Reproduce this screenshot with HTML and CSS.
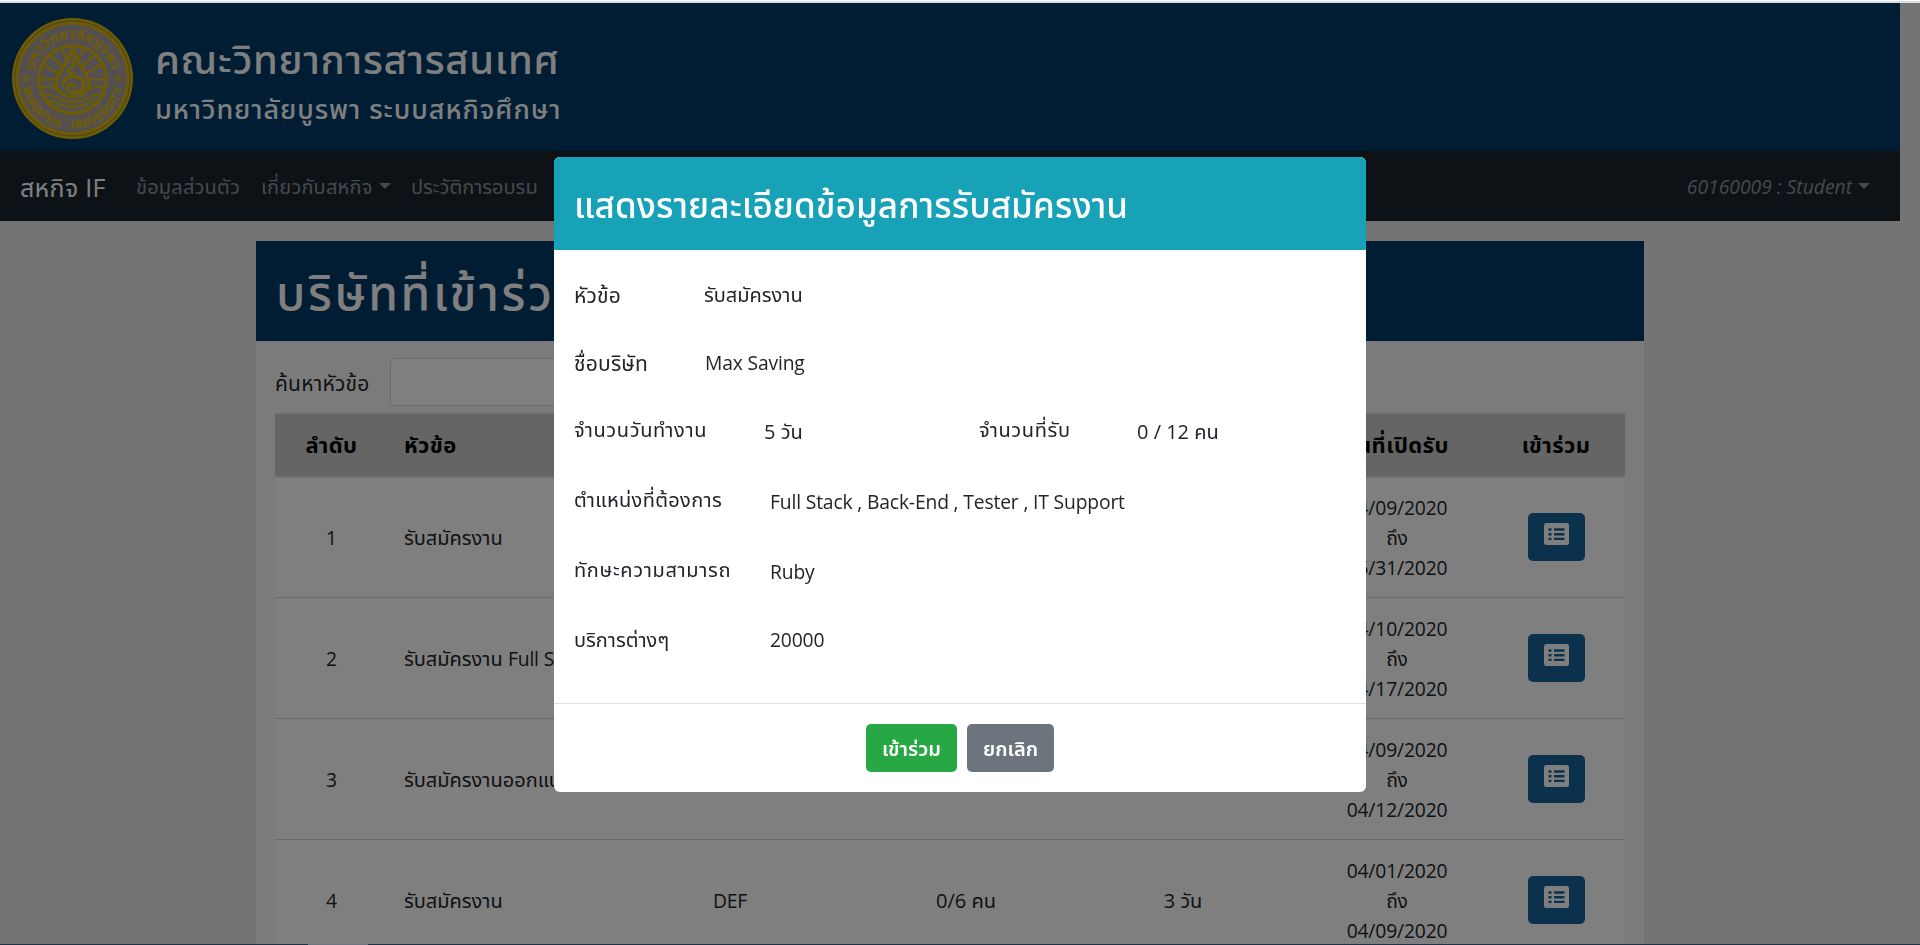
FILE: index.html
```html
<!DOCTYPE html>
<html lang="th">
<head>
<meta charset="utf-8">
<title>สหกิจ IF</title>
<link rel="stylesheet" href="styles.css">
</head>
<body>
<div class="page">
  <header class="banner">
    <svg class="logo" viewBox="0 0 120 120">
      <defs>
        <path id="arcTop" d="M20.500 60a39.500 39.500 0 0 1 79 0"/>
        <path id="arcBottom" d="M10 60a50 50 0 0 0 100 0"/>
      </defs>
      <circle cx="60" cy="60" r="60" fill="#ddba00"/>
      <circle cx="60" cy="60" r="57" fill="none" stroke="#a08a50" stroke-width="1.200"/>
      <circle cx="60" cy="60" r="53.500" fill="#a9a0a4"/>
      <text class="seal-th"><textPath href="#arcTop" startOffset="50%" text-anchor="middle">มหาวิทยาลัยบูรพา</textPath></text>
      <text class="seal-en"><textPath href="#arcBottom" startOffset="50%" text-anchor="middle">BURAPHA &#160; UNIVERSITY</textPath></text>
      <g fill="none" stroke="#ddba00">
        <circle cx="14.500" cy="60" r="2.300" stroke-width="1.600"/>
        <circle cx="105" cy="60" r="2.300" stroke-width="1.600"/>
        <circle cx="60" cy="61" r="33.500" stroke-width="3"/>
        <path stroke-width="2.200" d="M57 47L50 31M63 47l7-16M51 49L38 37M69 49l13-12M46 55L31 46M74 55l15-9M43 61H29M77 61h14"/>
        <path stroke-width="2" d="M28 69q12-4 16 2q16 13 32 0q5-6 16-2M29 76q10-1 15 3q16 9 32 0q5-4 15-3M32 82q8 0 13 3q15 6 30 0q5-3 13-3"/>
        <path fill="#a9a0a4" stroke-width="3" d="M60 28C58 45 43 54 44 66a16 12 0 0 0 32 0C77 54 62 45 60 28Z"/>
        <path stroke-width="3" stroke-linecap="round" d="M60 42q4 6-2 8q-5 4 2 5M51 66q0-7 9-8q11 0 11 8q-1 8-10 8q-7-1-6-6q4-4 8 0"/>
      </g>
    </svg>
    <div class="banner-text">
      <h1 class="faculty">คณะวิทยาการสารสนเทศ</h1>
      <p class="univ">มหาวิทยาลัยบูรพา ระบบสหกิจศึกษา</p>
    </div>
  </header>
  <nav class="nav">
    <span class="brand">สหกิจ IF</span>
    <span class="link link-info">ข้อมูลส่วนตัว</span>
    <span class="link link-about">เกี่ยวกับสหกิจ<i class="caret"></i></span>
    <span class="link link-history">ประวัติการอบรม</span>
    <span class="link user">60160009 : Student<i class="caret"></i></span>
  </nav>
  <main class="card">
    <div class="card-head"><h2 class="card-title">บริษัทที่เข้าร่วม</h2></div>
    <div class="card-body">
      <div class="search"><label class="search-label">ค้นหาหัวข้อ</label><input class="search-input" type="text"></div>
      <table class="jobs">
        <colgroup><col class="c1"><col class="c2"><col class="c3"><col class="c4"><col class="c5"><col class="c6"><col class="c7"></colgroup>
        <thead><tr><th>ลำดับ</th><th class="left">หัวข้อ</th><th></th><th></th><th></th><th>วันที่เปิดรับ</th><th>เข้าร่วม</th></tr></thead>
        <tbody>
          <tr><td class="latin">1</td><td class="left">รับสมัครงาน</td><td></td><td></td><td></td><td class="latin">04/09/2020<br>ถึง<br>05/31/2020</td><td><button class="list-btn"><svg class="list-icon" viewBox="0 0 25 22"><rect width="25" height="22" rx="2.500" fill="#fff"/><path class="list-lines" d="M4.500 6.500h3M10 6.500h10.500M4.500 11.200h3M10 11.200h10.500M4.500 15.900h3M10 15.900h10.500"/></svg></button></td></tr>
          <tr><td class="latin">2</td><td class="left">รับสมัครงาน <span class="latin">Full S</span></td><td></td><td></td><td></td><td class="latin">04/10/2020<br>ถึง<br>04/17/2020</td><td><button class="list-btn"><svg class="list-icon" viewBox="0 0 25 22"><rect width="25" height="22" rx="2.500" fill="#fff"/><path class="list-lines" d="M4.500 6.500h3M10 6.500h10.500M4.500 11.200h3M10 11.200h10.500M4.500 15.900h3M10 15.900h10.500"/></svg></button></td></tr>
          <tr><td class="latin">3</td><td class="left">รับสมัครงานออกแบ</td><td></td><td></td><td></td><td class="latin">04/09/2020<br>ถึง<br>04/12/2020</td><td><button class="list-btn"><svg class="list-icon" viewBox="0 0 25 22"><rect width="25" height="22" rx="2.500" fill="#fff"/><path class="list-lines" d="M4.500 6.500h3M10 6.500h10.500M4.500 11.200h3M10 11.200h10.500M4.500 15.900h3M10 15.900h10.500"/></svg></button></td></tr>
          <tr><td class="latin">4</td><td class="left">รับสมัครงาน</td><td class="latin">DEF</td><td>0/6 คน</td><td>3 วัน</td><td class="latin">04/01/2020<br>ถึง<br>04/09/2020</td><td><button class="list-btn"><svg class="list-icon" viewBox="0 0 25 22"><rect width="25" height="22" rx="2.500" fill="#fff"/><path class="list-lines" d="M4.500 6.500h3M10 6.500h10.500M4.500 11.200h3M10 11.200h10.500M4.500 15.900h3M10 15.900h10.500"/></svg></button></td></tr>
        </tbody>
      </table>
    </div>
  </main>
</div>
<div class="backdrop">
  <section class="modal">
    <div class="modal-head"><h3 class="modal-title">แสดงรายละเอียดข้อมูลการรับสมัครงาน</h3></div>
    <div class="modal-body">
      <div class="row short"><span class="wide">หัวข้อ</span><span>รับสมัครงาน</span></div>
      <div class="row short"><span class="wide">ชื่อบริษัท</span><span class="latin name">Max Saving</span></div>
      <div class="row quad"><span class="spaced">จำนวนวันทำงาน</span><span class="low">5 วัน</span><span class="spaced">จำนวนที่รับ</span><span class="low">0 / 12 คน</span></div>
      <div class="row long"><span class="slight">ตำแหน่งที่ต้องการ</span><span class="latin low">Full Stack , Back-End , Tester , IT Support</span></div>
      <div class="row long"><span class="spaced">ทักษะความสามารถ</span><span class="latin low">Ruby</span></div>
      <div class="row long"><span>บริการต่างๆ</span><span class="latin">20000</span></div>
    </div>
    <div class="modal-foot"><button class="btn join">เข้าร่วม</button><button class="btn cancel">ยกเลิก</button></div>
  </section>
</div>
<div class="edge-top"></div>
<div class="edge-bottom"></div>
</body>
</html>
```
FILE: styles.css
```css
* { box-sizing: border-box; }
body { margin: 0; height: 945px; overflow: hidden; background: #e8e8e8; color: #212529; font: 20px/30px "Open Sans", "Noto Sans", "Noto Sans Thai", sans-serif; }
h1, h2, h3, p { margin: 0; font-weight: 500; }
.latin { font-size: 19.300px; letter-spacing: -.16px; }
.name { padding-left: 1px; }
.wide { font-size: 21px; letter-spacing: .2px; }
.spaced { letter-spacing: .65px; }
.slight { letter-spacing: .35px; }
.page { width: 1900px; height: 945px; padding-top: 3px; overflow: hidden; }
.banner { height: 148px; background: #003b68; display: flex; padding: 15px 12px; gap: 22px; color: #fff; }
.logo { width: 121px; height: 121px; }
.seal-th { font-size: 14px; font-weight: 700; fill: #ddba00; letter-spacing: .3px; }
.seal-en { font: 700 12px "Roboto", sans-serif; fill: #ddba00; letter-spacing: .3px; }
.banner-text { padding-top: 13px; white-space: nowrap; }
.faculty { font-size: 40px; line-height: 56px; letter-spacing: .7px; }
.univ { font-size: 27px; line-height: 44px; font-weight: 500; letter-spacing: .95px; }
.nav { height: 70px; background: #1b252f; display: flex; align-items: center; padding: 2px 30px 0 20px; white-space: nowrap; color: #8d9297; }
.brand { font-size: 25px; color: #fff; width: 116px; letter-spacing: .3px; }
.link-info { width: 125px; letter-spacing: .2px; }
.link-about { width: 150px; letter-spacing: .2px; }
.user { margin-left: auto; font-style: italic; font-size: 19.300px; }
.caret { display: inline-block; margin-left: 6px; vertical-align: 5px; border: 6px solid transparent; border-top-color: currentColor; border-bottom: 0; }
.card { margin: 20px 0 0 256px; width: 1388px; background: #f7f7f7; }
.card-head { height: 100px; background: #003b68; color: #fff; padding: 21px 20px; }
.card-title { font-size: 48px; line-height: 60px; white-space: nowrap; letter-spacing: 2.600px; }
.card-body { padding: 17px 19px; }
.search { display: flex; align-items: center; height: 48px; margin-bottom: 7px; }
.search-label { width: 115px; white-space: nowrap; font-size: 21px; padding-top: 1px; letter-spacing: .2px; }
.search-input { width: 400px; height: 48px; border: 1px solid #ced4da; border-radius: 5px; background: #fff; }
.jobs { width: 1350px; table-layout: fixed; border-collapse: collapse; background: #fff; text-align: center; }
.c1 { width: 113px; } .c2 { width: 199px; } .c3 { width: 286px; } .c4 { width: 186px; } .c5 { width: 248px; } .c6 { width: 180px; } .c7 { width: 138px; }
.jobs th { height: 63px; padding: 0 0 2px; background: #cbcbcb; color: #000; font-size: 22px; letter-spacing: .4px; border-top: 1px solid #dee2e6; border-bottom: 2px solid #dee2e6; }
.jobs td { height: 121px; padding: 2px 5px 0; border-bottom: 1px solid #d3d7db; white-space: nowrap; }
.jobs .left { text-align: left; padding-left: 16px; }
.list-btn { width: 57px; height: 48px; border: 0; border-radius: 5px; background: #17639a; padding: 0; margin: -2px auto 0; display: flex; align-items: flex-start; justify-content: center; }
.list-icon { display: block; width: 25px; height: 22px; margin-top: 10px; }
.list-lines { stroke: #17639a; stroke-width: 2.4; fill: none; }
.backdrop { position: fixed; inset: 3px 0 0; background: rgba(0,0,0,.5); padding: 154px 554px 0; }
.modal { width: 812px; height: 635px; background: #fff; border-radius: 6px; overflow: hidden; display: flex; flex-direction: column; }
.modal-head { height: 93px; background: #17a2b8; color: #fff; padding: 25px 20px; }
.modal-title { font-size: 35px; line-height: 45px; white-space: nowrap; letter-spacing: .1px; }
.modal-body { height: 453px; padding: 30px 20px 0; white-space: nowrap; }
.row { display: grid; height: 70px; }
.short { grid-template-columns: 130px 1fr; height: 67.500px; }
.quad { grid-template-columns: 190px 215px 158px 1fr; }
.long { grid-template-columns: 196px 1fr; }
.low { padding-top: 2px; }
.modal-foot { border-top: 1px solid #dee2e6; padding-top: 20px; display: flex; justify-content: center; gap: 10px; }
.btn { height: 48px; border: 0; border-radius: 5px; color: #fff; font: inherit; font-weight: 600; padding: 2px 0 0; }
.join { width: 91px; background: #28a745; }
.cancel { width: 87px; background: #6c757d; }
.edge-top { position: fixed; inset: 0 0 auto; height: 3px; background: #d8dee2; border-top: 1px solid #fff; }
.edge-bottom { position: fixed; inset: auto 0 0; height: 1px; background: linear-gradient(90deg, #1f3348 308px, #6b7783 308px 368px, #1f3348 368px); }
```
